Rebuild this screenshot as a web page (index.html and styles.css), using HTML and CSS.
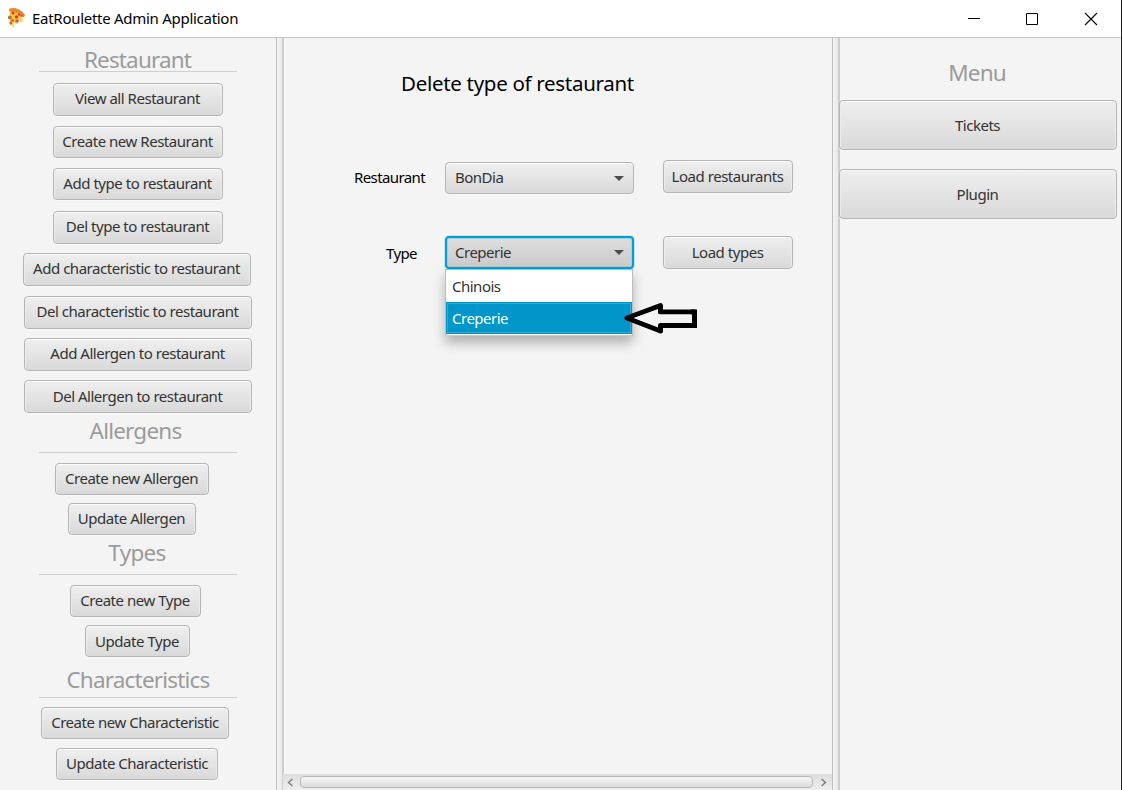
FILE: index.html
```html
<!DOCTYPE html>
<html lang="en">
<head>
<meta charset="utf-8">
<title>EatRoulette Admin Application</title>
<link rel="stylesheet" href="styles.css">
</head>
<body>
<div class="window">
  <header class="titlebar">
    <svg class="logo" width="20" height="22" viewBox="0 0 20 22">
      <path d="M3 3 L17 9 L14 12 L14 15 L11 14 L7 16.500 L7 20 Q5.500 21 5 18 L3 18 Z" fill="#fbc93d"/>
      <path d="M2 2 Q4 .5 8 1 Q15 3 18 8 Q18 10.500 16 10 Q12 5 3 4.500 Q1.500 4 2 2Z" fill="#e9872c"/>
      <path d="M6 15 L6.500 19 M14 11 L15.500 15 M10 15v2" stroke="#f5dd8b" stroke-width="2.400"/>
      <circle cx="6" cy="6" r="1.600" fill="#e23b2e"/><circle cx="9.500" cy="10" r="1.700" fill="#e23b2e"/><circle cx="5.500" cy="13.500" r="1.300" fill="#e23b2e"/><circle cx="12" cy="7.500" r="1.300" fill="#e23b2e"/>
      <circle cx="2.800" cy="10.500" r="1.900" fill="#a5705c"/><circle cx="10" cy="14" r="1.800" fill="#a5705c"/><circle cx="14.500" cy="8.500" r="1.300" fill="#a5705c"/><circle cx="3.800" cy="16" r="1.500" fill="#a5705c"/>
    </svg>
    <span class="app-name">EatRoulette Admin Application</span>
    <svg class="controls" width="134" height="18" viewBox="0 0 134 18" fill="none" stroke="#000">
      <path d="M0 8.500h12M58.500 3.500h11v11h-11z"/><path d="M117 3l12 12M129 3l-12 12" stroke-width="1.100"/>
    </svg>
  </header>
  <div class="panes">
    <aside class="sidebar">
      <h2 class="heading h-restaurant">Restaurant</h2>
      <button class="btn mid b1">View all Restaurant</button>
      <button class="btn mid b2">Create new Restaurant</button>
      <button class="btn mid b3">Add type to restaurant</button>
      <button class="btn mid b4">Del type to restaurant</button>
      <button class="btn wide b5">Add characteristic to restaurant</button>
      <button class="btn wide b6">Del characteristic to restaurant</button>
      <button class="btn wide b7">Add Allergen to restaurant</button>
      <button class="btn wide b8">Del Allergen to restaurant</button>
      <h2 class="heading h-allergens">Allergens</h2>
      <button class="btn b9">Create new Allergen</button>
      <button class="btn b10">Update Allergen</button>
      <h2 class="heading h-types">Types</h2>
      <button class="btn b11">Create new Type</button>
      <button class="btn b12">Update Type</button>
      <h2 class="heading h-chars">Characteristics</h2>
      <button class="btn b13">Create new Characteristic</button>
      <button class="btn b14">Update Characteristic</button>
    </aside>
    <div class="divider"></div>
    <main class="center">
      <h1 class="title">Delete type of restaurant</h1>
      <div class="row row-restaurant">
        <span class="label l-restaurant">Restaurant</span>
        <div class="combo"><span>BonDia</span><i class="caret"></i></div>
        <button class="btn load">Load restaurants</button>
      </div>
      <div class="row row-type">
        <span class="label l-type">Type</span>
        <div class="combo focused"><span>Creperie</span><i class="caret"></i>
          <div class="popup">
            <div class="cell">Chinois</div>
            <div class="cell selected">Creperie</div>
          </div>
          <svg class="pointer" width="78" height="34" viewBox="0 0 78 34"><path d="M6 17 L39.500 4.500 V11 H73.500 V24.500 H39.500 V30 Z" fill="none" stroke="#000" stroke-width="5" stroke-linejoin="round"/><path d="M70 8.500h6v18.500h-6z"/><path d="M13 17 L37 8.500 V13.500 H71 V22 H37 V26 Z" fill="#f4f4f4"/></svg>
        </div>
        <button class="btn load">Load types</button>
      </div>
      <div class="scrollbar">
        <svg width="7" height="9" viewBox="0 0 7 9"><path d="M5.500 1L1.500 4.500L5.500 8" fill="none" stroke="#777" stroke-width="1.300"/></svg>
        <div class="thumb"></div>
        <svg width="7" height="9" viewBox="0 0 7 9"><path d="M1.500 1L5.500 4.500L1.500 8" fill="none" stroke="#777" stroke-width="1.300"/></svg>
      </div>
    </main>
    <div class="divider"></div>
    <aside class="menu">
      <h2 class="heading h-menu">Menu</h2>
      <button class="btn big tickets">Tickets</button>
      <button class="btn big plugin">Plugin</button>
    </aside>
  </div>
</div>
</body>
</html>
```
FILE: styles.css
```css
* { box-sizing: border-box; }
body { margin: 0; font-family: "Noto Sans", sans-serif; background: #f4f4f4; }
.window { width: 1122px; height: 790px; display: flex; flex-direction: column; border-right: 1px solid #222; overflow: hidden; }
.titlebar { height: 38px; flex: none; display: flex; align-items: center; background: #fff; border-bottom: 1px solid #c4c4c4; padding-left: 7px; }
.logo { flex: none; margin-top: -1px; }
.app-name { margin: -2px 0 0 5px; font-size: 15px; letter-spacing: -0.28px; color: #000; white-space: nowrap; }
.controls { margin-left: auto; margin-right: 19px; }
.panes { flex: 1; display: flex; min-height: 0; }
.sidebar { width: 276px; height: 752px; display: flex; flex-direction: column; align-items: flex-start; }
.divider { width: 8px; margin-right: -1px; flex: none; border-left: 1px solid #bdbdbd; border-right: 2px solid #cecece; background: linear-gradient(90deg, #f4f4f4, #e8e8e8); }

.heading { margin: 0; font-weight: 400; font-size: 22.5px; line-height: 32px; letter-spacing: -0.8px; color: #9b9b9b; white-space: nowrap; flex: none; }
.sidebar .heading { width: 198px; margin-left: 39px; text-align: center; border-bottom: 1px solid #cfcfcf; }
.sidebar .h-restaurant { height: 28px; margin-top: 6px; padding-right: 1px; letter-spacing: -0.85px; }
.sidebar .h-allergens { height: 38px; margin-top: 2px; padding-right: 5px; }
.sidebar .h-types { height: 38px; margin-top: 2px; padding-right: 2px; letter-spacing: -0.7px; }
.h-chars { height: 34px; margin-top: 7px; }

.btn { display: block; flex: none; height: 33px; padding: 0 1px 3px 0; border: 1px solid #b5b5b5; border-radius: 4px; background: linear-gradient(#efefef, #d9d9d9); box-shadow: inset 0 1px #fcfcfc, inset 1px 0 #ececec, inset -1px 0 #ececec, 0 1px #f9f9f9; font-family: inherit; font-size: 15px; line-height: 20px; letter-spacing: -0.47px; color: #333; text-align: center; white-space: nowrap; }
.mid { width: 170px; margin-left: 53px; }
.wide { width: 228px; margin-left: 24px; }
.b1 { margin-top: 11px; }
.b2, .b3 { margin-top: 10px; height: 32px; }
.b4 { margin-top: 11px; }
.b5 { margin-top: 9px; margin-left: 23px; }
.b6 { margin-top: 10px; }
.b7 { margin-top: 9px; }
.b8 { margin-top: 9px; padding-bottom: 1px; }
.b9 { width: 154px; height: 32px; margin: 10px 0 0 55px; }
.b10 { width: 128px; height: 32px; margin: 8px 0 0 68px; }
.b11 { width: 131px; height: 32px; margin: 10px 0 0 70px; }
.b12 { width: 105px; height: 32px; margin: 8px 0 0 85px; padding-bottom: 1px; }
.b13 { width: 188px; height: 32px; margin: 9px 0 0 41px; padding-right: 0; }
.b14 { width: 162px; height: 32px; margin: 9px 0 0 56px; padding-right: 0; }

.center { width: 549px; display: flex; flex-direction: column; }
.title { margin: 29px 0 0 118px; font-weight: 400; font-size: 20.5px; line-height: 32px; letter-spacing: -0.3px; color: #000; white-space: nowrap; }
.row { display: grid; grid-template-columns: 162px 189px 130px; height: 33px; }
.row-restaurant { margin-top: 61px; }
.row-type { margin-top: 43px; }
.label { font-size: 15px; line-height: 34px; letter-spacing: -0.6px; color: #000; white-space: nowrap; }
.row-restaurant .label { line-height: 35px; }
.l-restaurant { margin-left: 71px; }
.l-type { margin-left: 103px; }
.combo { position: relative; height: 32px; margin-top: 2px; border: 1px solid #b5b5b5; border-radius: 4px; background: linear-gradient(#efefef, #d9d9d9); box-shadow: inset 0 1px #fcfcfc, 0 1px #f9f9f9; padding: 0 9px; display: flex; align-items: center; justify-content: space-between; font-size: 15px; line-height: 20px; letter-spacing: -0.5px; color: #333; }
.caret { border: 5px solid transparent; border-top-color: #4d4d4d; border-bottom: 0; }
.combo > span { margin-top: -2px; }
.focused { height: 33px; margin-top: 0; border: 2px solid #039ed3; padding: 0 8px; background: linear-gradient(#dedede, #cacaca); box-shadow: 0 0 0 1px #c5e5f1, inset 0 0 0 1px #a9cfdc; }
.focused > span { margin-top: -1px; }
.load { width: 130px; margin-left: 29px; padding-bottom: 1px; }
.popup { position: absolute; left: -2px; top: 31px; width: 188px; height: 67px; border: 1px solid #bdbdbd; border-bottom-color: #ccc; background: #fff; box-shadow: 0 7px 11px rgba(0,0,0,.28); z-index: 1; }
.cell { height: 32px; padding-left: 6px; line-height: 32px; }
.selected { background: #0096c9; color: #fff; box-shadow: inset 0 0 0 1px #0096c9, inset 0 0 0 2px #30aad4; }
.pointer { position: absolute; z-index: 2; left: 174px; top: 63px; }
.scrollbar { margin-top: auto; height: 16px; display: flex; align-items: center; padding: 0 5px 0 4px; background: linear-gradient(#dedede, #eee); justify-content: space-between; }
.thumb { width: 513px; height: 12px; margin-right: 2px; border: 1px solid #b8b8b8; border-radius: 4px; background: linear-gradient(#f6f6f6, #dcdcdc); }

.menu { flex: 1; }
.h-menu { margin: 19px 6px 0 0; text-align: center; letter-spacing: -0.9px; }
.big { width: 278px; height: 50px; padding-bottom: 1px; }
.tickets { margin-top: 11px; }
.plugin { margin-top: 19px; }
```
